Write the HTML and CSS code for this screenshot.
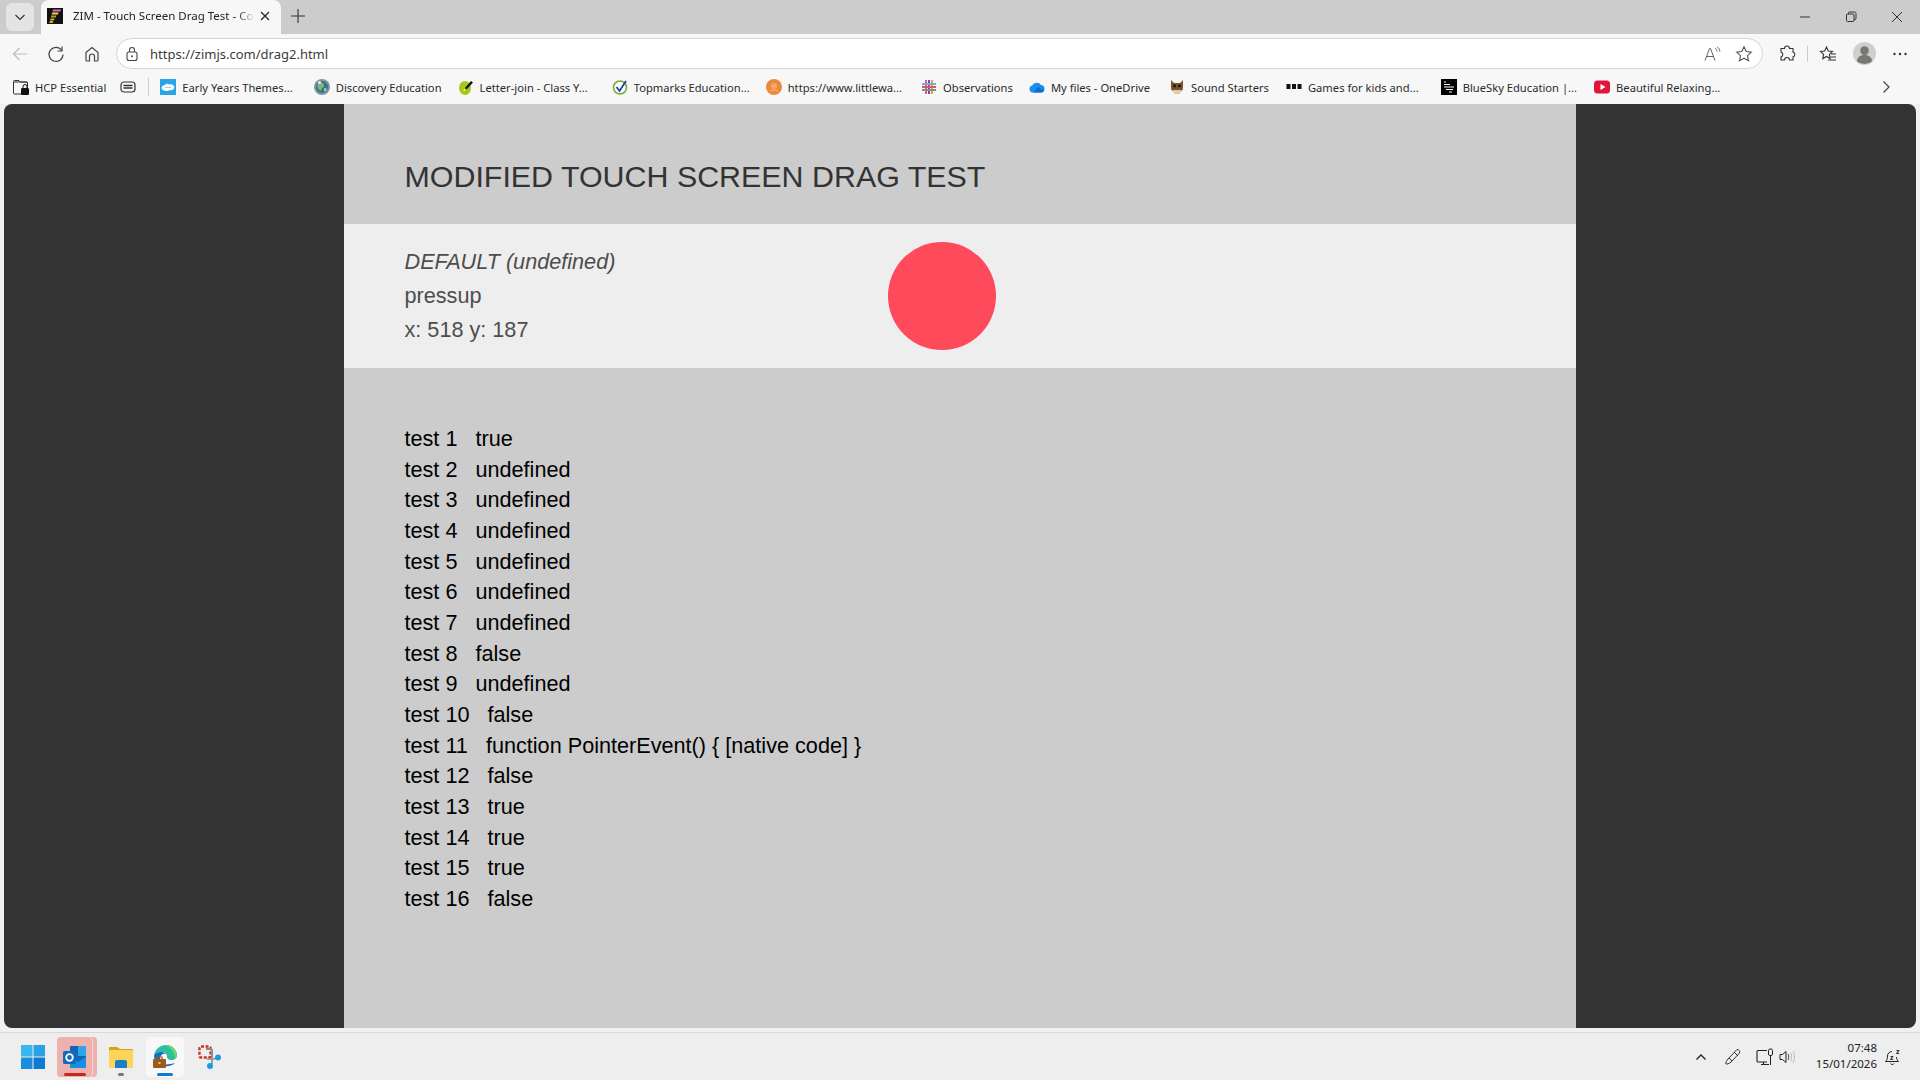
FILE: index.html
```html
<!DOCTYPE html>
<html lang="en">
<head>
<meta charset="utf-8">
<title>ZIM - Touch Screen Drag Test</title>
<link rel="stylesheet" href="styles.css">
</head>
<body>
<header class="tabstrip">
  <button class="tab-switch"><svg width="12" height="12" viewBox="0 0 12 12"><path d="M1.5 4 6 8.5 10.5 4" fill="none" stroke="#333" stroke-width="1.2"/></svg></button>
  <div class="tab">
    <svg class="tab-fav" width="16" height="16" viewBox="0 0 16 16"><rect width="16" height="16" fill="#111"/><path d="M6 1.5h8l-.6 2H5.4z" fill="#d86cc0"/><path d="M5.2 4.5h6.4l-.6 2H4.6z" fill="#e8d84a"/><path d="M4.4 7.5h5l-.6 2H3.8z" fill="#e88a2c"/><path d="M3.6 10.5h4l-.6 2H3z" fill="#8ac44a"/><path d="M2.8 13h3.4l-.5 2H2.3z" fill="#e8a02c"/></svg>
    <span class="tab-title">ZIM - Touch Screen Drag Test - Co</span>
    <svg class="tab-close" width="12" height="12" viewBox="0 0 12 12"><path d="M2 2l8 8M10 2l-8 8" stroke="#222" stroke-width="1.2"/></svg>
  </div>
  <svg class="new-tab" width="16" height="16" viewBox="0 0 16 16"><path d="M8 1v14M1 8h14" stroke="#333" stroke-width="1.1"/></svg>
  <div class="win-controls">
    <svg width="12" height="12" viewBox="0 0 12 12"><path d="M1 6h10" stroke="#333" stroke-width="1"/></svg>
    <svg width="12" height="12" viewBox="0 0 12 12"><rect x="1.5" y="3" width="7.5" height="7.5" rx="1" fill="none" stroke="#333"/><path d="M3.5 3V2a1 1 0 0 1 1-1h5a1.500 1.500 0 0 1 1.500 1.500v5a1 1 0 0 1-1 1H9" fill="none" stroke="#333"/></svg>
    <svg width="12" height="12" viewBox="0 0 12 12"><path d="M1 1l10 10M11 1L1 11" stroke="#333" stroke-width="1"/></svg>
  </div>
</header>

<nav class="toolbar">
  <svg class="tb-back" width="18" height="18" viewBox="0 0 18 18"><path d="M16 9H2.500M8.500 3 2.500 9l6 6" fill="none" stroke="#bbb" stroke-width="1.200"/></svg>
  <svg class="tb-reload" width="18" height="18" viewBox="0 0 18 18"><path d="M14.800 5.500A7 7 0 1 0 16 9.500" fill="none" stroke="#444" stroke-width="1.200"/><path d="M15 1.500v4.500h-4.500" fill="none" stroke="#444" stroke-width="1.200"/></svg>
  <svg class="tb-home" width="18" height="18" viewBox="0 0 18 18"><path d="M3 7.500 9 2.500l6 5V15a1 1 0 0 1-1 1h-2.500v-4.500a2.500 2.500 0 0 0-5 0V16H4a1 1 0 0 1-1-1z" fill="none" stroke="#444" stroke-width="1.200"/></svg>
  <div class="urlbar">
    <svg width="14" height="16" viewBox="0 0 14 16"><rect x="2" y="6" width="10" height="8.500" rx="2" fill="none" stroke="#444" stroke-width="1.100"/><path d="M4.500 6V4a2.500 2.500 0 0 1 5 0v2" fill="none" stroke="#444" stroke-width="1.100"/><circle cx="7" cy="10.200" r="1" fill="#444"/></svg>
    <span class="url">https://zimjs.com/drag2.html</span>
    <svg class="url-read" width="18" height="16" viewBox="0 0 18 16"><path d="M1 14.500 5.500 2.500h1L11 14.500M2.800 10.500h6.400" fill="none" stroke="#666" stroke-width="1"/><path d="M11 2c1.500.8 2 2 2 3.500M13 .8c2 1 3 3 2.800 5" fill="none" stroke="#666" stroke-width=".9"/></svg>
    <svg class="url-star" width="18" height="18" viewBox="0 0 18 18"><path d="M9 1.800l2.200 4.700 5.100.6-3.800 3.500 1 5.100L9 13.200l-4.500 2.500 1-5.100L1.700 7.100l5.100-.6z" fill="none" stroke="#555" stroke-width="1.100"/></svg>
  </div>
  <svg class="tb-ext" width="18" height="18" viewBox="0 0 18 18"><path d="M6.500 3.500a2.500 2.500 0 0 1 5 0H15v3.500a2.500 2.500 0 0 1 0 4.800V15h-3.500a2.500 2.500 0 0 0-5 0H3v-3.200a2.500 2.500 0 0 0 0-4.800V3.500z" fill="none" stroke="#333" stroke-width="1.100"/></svg>
  <span class="tb-sep"></span>
  <svg class="tb-favs" width="18" height="18" viewBox="0 0 18 18"><path d="M7.500 2l1.800 4 4.200.5-3.100 2.900.8 4.200-3.700-2.100L3.800 13.600l.8-4.200L1.500 6.500 5.700 6z" fill="none" stroke="#333" stroke-width="1.100"/><path d="M12 9h5M11.500 12h5.500M9 15h8" stroke="#333" stroke-width="1"/></svg>
  <svg class="tb-avatar" width="23" height="23" viewBox="0 0 24 24"><circle cx="12" cy="12" r="12" fill="#d2cfcb"/><circle cx="12" cy="9" r="4.500" fill="#777"/><path d="M4 20c1-5 4-6.500 8-6.500s7 1.500 8 6.500a12 12 0 0 1-16 0z" fill="#777"/></svg>
  <svg class="tb-more" width="16" height="16" viewBox="0 0 16 16"><circle cx="2.500" cy="8" r="1.200" fill="#333"/><circle cx="8" cy="8" r="1.200" fill="#333"/><circle cx="13.500" cy="8" r="1.200" fill="#333"/></svg>
</nav>

<nav class="bookmarks">
  <a class="bm bm-hcp"><svg width="18" height="18" viewBox="0 0 18 18"><path d="M1.500 13V3.500a1 1 0 0 1 1-1H7l1.500 1.500h6a1 1 0 0 1 1 1V8" fill="none" stroke="#333"/><rect x="1.500" y="4" width="14" height="12" rx="1" fill="none" stroke="#333"/><rect x="9" y="10" width="8" height="7" rx="1.200" fill="#111"/><path d="M11 10V8.500a2 2 0 0 1 4 0V10" fill="none" stroke="#111"/></svg>HCP Essential</a>
  <a class="bm bm-group"><svg width="16" height="16" viewBox="0 0 16 16"><rect x="1" y="3" width="14" height="10" rx="3" fill="none" stroke="#333" stroke-width="1.200"/><path d="M3.500 6.500h9M3.500 9h9" stroke="#333" stroke-width="1.400"/></svg></a>
  <span class="bm-sep"></span>
  <a class="bm bm-early"><svg width="16" height="16" viewBox="0 0 16 16"><rect width="16" height="16" fill="#2aa3e8"/><path d="M3 11C.8 9.500 1.500 6.200 4.500 6.200c1-1.700 3.500-2 5-.7 2-1 4.800.5 4.800 2.800 0 2.300-2.500 3.400-4.500 2.700-1.500 1.200-4.800 1.500-6.800 0z" fill="#fff"/><path d="M5 8.500h6" stroke="#8ed0f4" stroke-width="1"/></svg>Early Years Themes...</a>
  <a class="bm bm-disc"><svg width="16" height="16" viewBox="0 0 16 16"><circle cx="8" cy="8" r="8" fill="#7f949e"/><circle cx="8" cy="8" r="6" fill="#2f7790"/><path d="M5 4c2.500-1 5 0 5 2.500S7.500 8 7.500 10.500 4 10.500 3.500 8 4 5 5 4z" fill="#86b56a"/><path d="M11 9c1.500 0 2 1 1 2.500s-2 1.500-2-.2.300-2.300 1-2.300z" fill="#b9d1a0"/><circle cx="5.500" cy="3.500" r="1.600" fill="#e3ecef"/></svg>Discovery Education</a>
  <a class="bm bm-letter"><svg width="16" height="16" viewBox="0 0 16 16"><ellipse cx="7" cy="9" rx="6" ry="7" fill="#a6c918"/><path d="M7 9l6-7 2 1.500-6.500 7z" fill="#111"/><path d="M6 10l2 1-2.500 1z" fill="#fff"/></svg>Letter-join - Class Y...</a>
  <a class="bm bm-top"><svg width="16" height="16" viewBox="0 0 16 16"><circle cx="8" cy="8.500" r="6.500" fill="#fff" stroke="#7aa63a" stroke-width="1.600"/><path d="M4.500 8l3 4L14 2" fill="none" stroke="#1c3fae" stroke-width="1.800"/></svg>Topmarks Education...</a>
  <a class="bm bm-little"><svg width="16" height="16" viewBox="0 0 16 16"><circle cx="8" cy="8" r="8" fill="#ec8a3c"/><circle cx="8" cy="7" r="3" fill="#f2a86e"/><path d="M4 12.500c1-2 7-2 8 0" fill="none" stroke="#f2a86e" stroke-width="1.500"/></svg>https://www.littlewa...</a>
  <a class="bm bm-obs"><svg width="16" height="16" viewBox="0 0 16 16"><path d="M5 1v14" stroke="#d85a9c" stroke-width="2"/><path d="M8 1v14" stroke="#7a4bb0" stroke-width="2"/><path d="M11 1v14" stroke="#e8a33a" stroke-width="2"/><path d="M1 5h14" stroke="#6cb0d8" stroke-width="2"/><path d="M1 8h14" stroke="#d85a5a" stroke-width="2"/><path d="M1 11h14" stroke="#8a8a8a" stroke-width="2"/></svg>Observations</a>
  <a class="bm bm-drive"><svg width="16" height="16" viewBox="0 0 16 16"><path d="M4 13.500a3.500 3.500 0 0 1-.8-6.900A5 5 0 0 1 12 6a3.800 3.800 0 0 1 .5 7.500z" fill="#1a8fe8"/><path d="M4 13.500 9 8l6 3.500c-.5 1.200-1.500 2-2.500 2z" fill="#0f6cd0"/></svg>My files - OneDrive</a>
  <a class="bm bm-sound"><svg width="16" height="16" viewBox="0 0 16 16"><path d="M2 1l3 3h6l3-3v8c0 2-2 4-6 4S2 11 2 9z" fill="#7a5230"/><circle cx="5.500" cy="7" r="1.400" fill="#111"/><circle cx="10.500" cy="7" r="1.400" fill="#111"/><path d="M4 11h8l-1 4H5z" fill="#e8c8a8"/></svg>Sound Starters</a>
  <a class="bm bm-games"><svg width="16" height="16" viewBox="0 0 16 16"><rect x="0.500" y="5" width="4" height="5" fill="#111"/><rect x="6" y="5" width="4" height="5" fill="#111"/><rect x="11.500" y="5" width="4" height="5" fill="#111"/></svg>Games for kids and...</a>
  <a class="bm bm-blue"><svg width="16" height="16" viewBox="0 0 16 16"><rect width="16" height="16" fill="#000"/><path d="M3 3h2M3 5.500h6M3 8h10M5 10.500h7M8 13h3" stroke="#fff" stroke-width="1.200"/></svg>BlueSky Education |...</a>
  <a class="bm"><svg width="16" height="16" viewBox="0 0 16 16"><rect width="16" height="13" y="1.500" rx="3.500" fill="#e3143c"/><path d="M6.500 5v6l5-3z" fill="#fff"/></svg>Beautiful Relaxing...</a>
  <svg class="bm-more" width="12" height="14" viewBox="0 0 12 14"><path d="M3.500 1.500 9 7l-5.500 5.500" fill="none" stroke="#444" stroke-width="1.200"/></svg>
</nav>

<main class="viewport">
  <div class="stage">
    <section class="sheet">
      <h1 class="title">MODIFIED TOUCH SCREEN DRAG TEST</h1>
      <div class="panel">
        <div class="status">
          <div class="status-mode">DEFAULT (undefined)</div>
          <div>pressup</div>
          <div>x: 518 y: 187</div>
        </div>
        <div class="dot"></div>
      </div>
      <div class="results">
        <div>test 1 &nbsp; true</div>
        <div>test 2 &nbsp; undefined</div>
        <div>test 3 &nbsp; undefined</div>
        <div>test 4 &nbsp; undefined</div>
        <div>test 5 &nbsp; undefined</div>
        <div>test 6 &nbsp; undefined</div>
        <div>test 7 &nbsp; undefined</div>
        <div>test 8 &nbsp; false</div>
        <div>test 9 &nbsp; undefined</div>
        <div>test 10 &nbsp; false</div>
        <div>test 11 &nbsp; function PointerEvent() { [native code] }</div>
        <div>test 12 &nbsp; false</div>
        <div>test 13 &nbsp; true</div>
        <div>test 14 &nbsp; true</div>
        <div>test 15 &nbsp; true</div>
        <div>test 16 &nbsp; false</div>
      </div>
    </section>
  </div>
</main>

<footer class="taskbar">
  <div class="task-apps">
    <span class="task task-start"><svg width="24" height="24" viewBox="0 0 24 24"><rect x="0" y="0" width="11.500" height="11.500" fill="#3cb4ee"/><rect x="12.500" y="0" width="11.500" height="11.500" fill="#2aa0e6"/><rect x="0" y="12.500" width="11.500" height="11.500" fill="#1a8ddc"/><rect x="12.500" y="12.500" width="11.500" height="11.500" fill="#0f7bd0"/></svg></span>
    <span class="task task-outlook">
      <svg width="26" height="26" viewBox="0 0 26 26"><rect x="8" y="2" width="16" height="20" rx="1" fill="#1066b4"/><rect x="16" y="2" width="8" height="10" fill="#28a8ea"/><path d="M8 13l8 5 8-5v10a1 1 0 0 1-1 1H9a1 1 0 0 1-1-1z" fill="#1490df"/><rect x="1" y="7" width="13" height="13" rx="1.500" fill="#0f6cbd"/><circle cx="7.500" cy="13.500" r="3.300" fill="none" stroke="#fff" stroke-width="1.800"/></svg>
      <i class="task-bar task-bar-red"></i>
    </span>
    <span class="task task-files">
      <svg width="24" height="24" viewBox="0 0 24 24"><path d="M0 3a1 1 0 0 1 1-1h7l3 2h12a1 1 0 0 1 1 1v3H0z" fill="#d9a116"/><rect y="5" width="24" height="18" rx="1" fill="#fcd45c"/><path d="M6 17a2 2 0 0 1 2-2h8a2 2 0 0 1 2 2v6H6z" fill="#1a7fc4"/></svg>
      <i class="task-bar task-bar-grey"></i>
    </span>
    <span class="task task-edge">
      <svg width="26" height="26" viewBox="0 0 26 26"><path d="M2 12C3 5 8 1 14 1c6 0 11 5 11 10 0 3-2 5-6 5-3 0-4-1.500-4-3 0-3-2-5-5-5-4 0-7 2-8 4z" fill="#2ebfa0"/><path d="M2 12c1-3 4-4 8-4 2 0 3 1 4 2-3-1-6 1-6 5 0 2 .5 3 1 4H3z" fill="#0f6fc4"/><path d="M14 1c6 0 11 5 11 10 0 2-1 3-2 4 .5-5-3-10-9-14z" fill="#6fd66c"/><path d="M9 20c3 3 10 3 14-1-3 1-9 2-14 1z" fill="#0f6fc4"/><rect x="1" y="15" width="13" height="9" rx="1" fill="#9c5a1c"/><path d="M5 15v-2h5v2" fill="none" stroke="#9c5a1c" stroke-width="1.200"/><rect x="6.500" y="18" width="2" height="2" fill="#f2c14e"/></svg>
      <i class="task-bar task-bar-blue"></i>
    </span>
    <span class="task task-snip"><svg width="24" height="24" viewBox="0 0 24 24"><rect x="1.500" y="1.500" width="11" height="11" rx="1.500" fill="none" stroke="#d0341c" stroke-width="2.400" stroke-dasharray="3 1.500"/><path d="M8 4h4a2 2 0 0 1 2 2v7" fill="none" stroke="#8a8a8a" stroke-width="2"/><path d="M9 14h6l5-1M14 14v5" fill="none" stroke="#8a8a8a" stroke-width="1.600"/><circle cx="20" cy="12.500" r="3" fill="#1a9de0"/><circle cx="12" cy="21" r="3" fill="#1a9de0"/></svg></span>
  </div>
  <div class="tray">
    <svg class="tray-chev" width="12" height="12" viewBox="0 0 12 12"><path d="M1.500 8.500 6 4l4.500 4.500" fill="none" stroke="#222" stroke-width="1.300"/></svg>
    <svg class="tray-pen" width="18" height="18" viewBox="0 0 18 18"><path d="M13 1.500c2 0 3.500 2 2.500 3.500L7 14c-1.500 1.500-4.500 2.500-5 2-.5-1 .5-3.500 2-5z M10 4l4 4M5 10l3 3" fill="none" stroke="#333" stroke-width="1"/></svg>
    <svg class="tray-net" width="18" height="18" viewBox="0 0 18 18"><path d="M11 2.500H2a1 1 0 0 0-1 1V13a1 1 0 0 0 1 1h9" fill="none" stroke="#222" stroke-width="1.100"/><path d="M5 16.500h8M7.500 14v2.500" stroke="#222" stroke-width="1.100"/><rect x="12.500" y="1" width="4" height="6.500" rx="1.500" fill="none" stroke="#222" stroke-width="1"/><path d="M14.500 7.500V17" stroke="#222" stroke-width="1"/></svg>
    <svg class="tray-vol" width="18" height="16" viewBox="0 0 18 16"><path d="M1 5.500h2.500L7 2.500v11L3.500 10.500H1z" fill="none" stroke="#222" stroke-width="1"/><path d="M9 5c1 1.500 1 4.500 0 6" fill="none" stroke="#444"/><path d="M11.500 3.500c1.500 2.500 1.500 6.500 0 9M14 2c2 3.500 2 8.500 0 12" fill="none" stroke="#bbb"/></svg>
    <div class="clock"><div>07:48</div><div>15/01/2026</div></div>
    <svg class="tray-bell" width="18" height="18" viewBox="0 0 18 18"><path d="M8 3.500a4.500 4.500 0 0 0-4.500 4.500c0 3-1 4.500-2 5.500h13c-1-1-2-2.500-2-4.500" fill="none" stroke="#222"/><path d="M6.500 15.500a2 2 0 0 0 3.500 0" fill="none" stroke="#222"/><text x="6" y="11.500" class="bell-z">z</text><text x="12" y="6" class="bell-z">z</text></svg>
  </div>
</footer>
</body>
</html>
```

FILE: styles.css
```css
* { box-sizing: border-box; }
html, body { margin: 0; height: 100%; }
body {
  display: flex;
  flex-direction: column;
  height: 1080px;
  overflow: hidden;
  background: #ccc;
  font-family: "Noto Sans", "Liberation Sans", sans-serif;
  color: #222;
}
svg { display: block; flex: none; }

/* tab strip */
.tabstrip {
  flex: none;
  height: 34px;
  display: flex;
  align-items: flex-start;
  background: #ccc;
  padding-left: 6px;
}
.tab-switch {
  width: 28px;
  height: 28px;
  margin-top: 3px;
  border: 0;
  border-radius: 6px;
  background: #e4e4e4;
  display: flex;
  align-items: center;
  justify-content: center;
  padding: 0;
}
.tab {
  width: 240px;
  height: 34px;
  margin-left: 7px;
  padding: 0 8px 2px 6px;
  display: flex;
  align-items: center;
  background: #f7f7f7;
  border-radius: 8px 8px 0 0;
}
.tab-title {
  width: 182px;
  margin-left: 10px;
  font-size: 11.500px;
  line-height: 20px;
  white-space: nowrap;
  overflow: hidden;
  -webkit-mask-image: linear-gradient(to right, #000 90%, transparent);
  mask-image: linear-gradient(to right, #000 90%, transparent);
}
.tab-close { margin-left: 4px; }
.new-tab { margin: 8px 0 0 9px; }
.win-controls {
  margin-left: auto;
  display: flex;
  gap: 34px;
  padding: 11px 17px 0 0;
}

/* toolbar */
.toolbar {
  flex: none;
  height: 36px;
  display: flex;
  align-items: center;
  background: #f7f7f7;
  padding: 3px 0 0 11px;
}
.tb-reload { margin-left: 18px; }
.tb-home { margin-left: 18px; }
.urlbar {
  width: 1647px;
  height: 31px;
  margin-left: 15px;
  padding: 0 9px 0 8px;
  display: flex;
  align-items: center;
  background: #fff;
  border: 1px solid #d4d4d4;
  border-radius: 16px;
}
.url {
  margin-left: 11px;
  font-size: 13px;
  line-height: 20px;
  color: #3c3c3c;
  flex: 1;
}
.url-star { margin-left: 13px; }
.tb-ext { margin-left: 15px; }
.tb-sep { width: 1px; height: 16px; margin-left: 11px; background: #ccc; }
.tb-favs { margin-left: 11px; }
.tb-avatar { margin-left: 16px; }
.tb-more { margin-left: 16px; }

/* bookmarks */
.bookmarks {
  flex: none;
  height: 34px;
  display: flex;
  align-items: center;
  background: #f7f7f7;
  padding: 0 28px 0 12px;
}
.bm {
  display: flex;
  align-items: center;
  gap: 6px;
  font-size: 11.200px;
  color: #2a2a2a;
  white-space: nowrap;
}
.bm-hcp { gap: 5px; margin-right: 14px; }
.bm-group { margin-right: 12px; }
.bm-sep { width: 1px; height: 18px; margin-right: 11px; background: #ccc; }
.bm-early { margin-right: 21px; }
.bm-disc { margin-right: 16px; }
.bm-letter { margin-right: 24px; }
.bm-top { margin-right: 16px; }
.bm-little { margin-right: 19px; }
.bm-obs { margin-right: 16px; }
.bm-drive { margin-right: 19px; }
.bm-sound { margin-right: 17px; }
.bm-games { margin-right: 22px; }
.bm-blue { margin-right: 17px; }
.bm-more { margin-left: auto; }

/* page */
.viewport {
  flex: 1;
  min-height: 0;
  background: #f0f0f0;
  padding: 0 4px 4px;
}
.stage {
  height: 924px;
  display: flex;
  justify-content: center;
  background: #333;
  border-radius: 8px;
  overflow: hidden;
  font-family: "Liberation Sans", Arial, sans-serif;
}
.sheet {
  width: 1232px;
  background: #ccc;
}
.title {
  margin: 0;
  height: 120px;
  padding: 24px 0 0 60.500px;
  display: flex;
  align-items: center;
  font-size: 30.400px;
  font-weight: 400;
  color: #333;
}
.panel {
  height: 144px;
  padding-left: 60.500px;
  display: flex;
  align-items: center;
  background: #eee;
}
.status {
  width: 483.500px;
  font-size: 21.650px;
  line-height: 34.300px;
  color: #4d4d4d;
}
.status-mode { font-style: italic; }
.dot {
  width: 108px;
  height: 108px;
  border-radius: 50%;
  background: #ff4a5c;
}
.results {
  padding: 56px 0 0 60.500px;
  font-size: 21.650px;
  line-height: 30.650px;
  color: #000;
}

/* taskbar */
.taskbar {
  flex: none;
  height: 48px;
  display: flex;
  justify-content: space-between;
  align-items: center;
  background: #eee;
  border-top: 1px solid #d8d8d8;
}
.task-apps { display: flex; align-items: center; padding-left: 21px; }
.task {
  position: relative;
  display: flex;
  align-items: center;
  justify-content: center;
  height: 40px;
}
.task-start { width: 24px; }
.task-outlook {
  width: 35px;
  margin-left: 12px;
  background: #eeb1ae;
  border-radius: 4px;
  box-shadow: 1px 0 0 #f3d6d4, 5px 0 0 #eeb1ae;
}
.task-files { width: 24px; margin-left: 17px; }
.task-edge {
  width: 38px;
  margin-left: 13px;
  background: #f8f8f8;
  border-radius: 4px;
}
.task-snip { width: 24px; margin-left: 14px; }
.task-bar {
  position: absolute;
  bottom: 1px;
  height: 3px;
  border-radius: 2px;
}
.task-bar-red { width: 22px; background: #c4281c; }
.task-bar-grey { width: 6px; background: #777; }
.task-bar-blue { width: 16px; background: #0f7bd0; }
.tray { display: flex; align-items: center; padding-right: 18px; }
.tray-chev { margin-right: 17px; }
.tray-pen { margin-right: 14px; }
.tray-net { margin-right: 5px; }
.tray-vol { margin-right: 19px; }
.clock {
  font-size: 11.500px;
  line-height: 16px;
  text-align: right;
  color: #222;
  margin: 0 7px 2px 0;
}
.bell-z { font-family: "Noto Sans", sans-serif; font-size: 7px; font-weight: 700; fill: #222; }
```
